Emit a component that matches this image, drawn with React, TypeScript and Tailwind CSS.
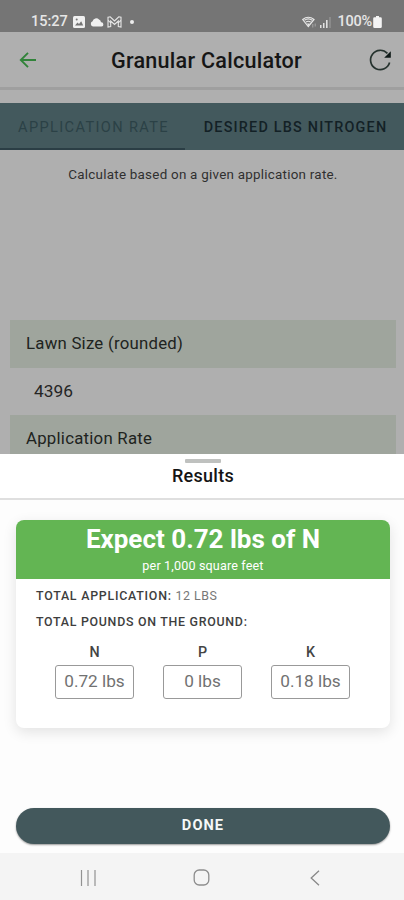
import React from 'react';

type Nutrient = {
  label: string;
  amount: string;
};

const nutrients: Nutrient[] = [
  { label: 'N', amount: '0.72 lbs' },
  { label: 'P', amount: '0 lbs' },
  { label: 'K', amount: '0.18 lbs' },
];

const StatusBar: React.FC = () => (
  <div className="flex h-8 items-center bg-[#757575] pt-3 pl-[31px] pr-[22px] text-[14.5px] font-medium text-[#e6e6e6]">
    <span>15:27</span>
    <svg className="ml-[5px] h-3 w-3" viewBox="0 0 12 12">
      <rect width="12" height="12" rx="1.5" fill="#f0f0f0" />
      <path d="M2 9.5 4.5 6.5 6 8 8.2 5.2 10.2 9.5Z" fill="#757575" />
      <circle cx="3.7" cy="3.4" r="1" fill="#757575" />
    </svg>
    <svg className="ml-[5px] h-2.5 w-3.5" viewBox="0 0 14 10">
      <path d="M3 9.5a2.7 2.7 0 0 1-.4-5.2A3.7 3.7 0 0 1 9 2.6 3.3 3.3 0 0 1 11 5.3a2.1 2.1 0 0 1 .5 4.2Z" fill="#f0f0f0" />
    </svg>
    <svg className="ml-[3px] h-3 w-[15px]" viewBox="0 0 15 12" fill="none" stroke="#e8e8e8" strokeWidth="1.1">
      <path d="M1 1.2 3.2.8 7.5 5 11.8.8 14 1.2V11L11.3 10.5V5L7.5 8.5 3.7 5V10.5L1 11ZM1 4l2.7 3M14 4l-2.7 3" />
    </svg>
    <span className="ml-2 h-1 w-1 rounded-full bg-[#ececec]" />

    <svg className="ml-auto h-3 w-4" viewBox="0 0 16 12" fill="none">
      <path d="M.7 3.5Q6.3-1 12 3.5L6.3 10.5Z" stroke="#e8e8e8" strokeWidth="1.2" />
      <path d="M2.5 4.2Q6.3 1.4 10.2 4.2M4 6.1Q6.3 4.4 8.6 6.1" stroke="#e8e8e8" strokeWidth="1.2" />
      <path d="M5 7.5h2.7L6.3 10Z" fill="#e8e8e8" />
      <path d="M10.8 8v3.5M13.2 7.5v3" stroke="#a5a5a5" strokeWidth="1" />
    </svg>
    <svg className="ml-[2px] h-[11px] w-[11px]" viewBox="0 0 11 11">
      <path d="M0 8h1.5v3H0zM3 6h1.5v5H3zM6 3h1.6v8H6z" fill="#e0e0e0" />
      <path d="M9.3 0h1.4v11H9.3z" fill="#949494" />
    </svg>
    <span className="ml-[6px] tracking-[-0.2px]">100%</span>
    <svg className="ml-px h-3 w-[9px]" viewBox="0 0 9 12">
      <path d="M3 0h3v1.2h1.5A1.3 1.3 0 0 1 8.8 2.5v8A1.4 1.4 0 0 1 7.4 12H1.6A1.4 1.4 0 0 1 .2 10.5v-8a1.3 1.3 0 0 1 1.3-1.3H3Z" fill="#f4f4f4" />
    </svg>
  </div>
);

const Header: React.FC = () => (
  <header className="flex h-[58px] shrink-0 items-center justify-between border-b-3 border-[#9f9f9f] pt-[1px] pl-[19px] pr-3">
    <svg className="h-[18px] w-[18px]" viewBox="0 0 18 18" fill="none" stroke="#31833a" strokeWidth="1.9">
      <path d="M9 1.8 1.8 9 9 16.2M2 9h15" />
    </svg>
    <h1 className="ml-[8px] pt-0.5 text-[21.6px] font-medium tracking-[0.25px] text-[#161616]">Granular Calculator</h1>
    <svg className="h-6 w-6" viewBox="0 0 24 24" fill="none">
      <path d="M21.6 14.6A9.7 9.7 0 1 1 19.4 5.4" stroke="#26332f" strokeWidth="1.7" />
      <path d="M22.8 3.2V9.8H16.2Z" fill="#0f1a18" />
    </svg>
  </header>
);

const Tabs: React.FC = () => (
  <div className="mt-[13px] flex h-[47px] shrink-0 bg-[#43595d]">
    <button className="w-[185px] border-b-2 border-[#2b3e45] pt-1 pl-0.5 text-[14.6px] tracking-[1.35px] text-[#2b4146]">
      APPLICATION RATE
    </button>
    <button className="flex-1 whitespace-nowrap pt-0.5 pl-0.5 text-[14.4px] font-medium tracking-[1.2px] text-[#132126]">
      DESIRED LBS NITROGEN
    </button>
  </div>
);

const FieldLabel: React.FC<{ children: React.ReactNode }> = ({ children }) => (
  <div className="flex h-12 shrink-0 items-center bg-[#9fa59d] pl-4 text-[16.8px] tracking-[0.24px] text-[#202320]">
    {children}
  </div>
);

const ResultCard: React.FC = () => (
  <section className="mt-5 mr-[14px] ml-4 h-52 overflow-hidden rounded-[8px] bg-white shadow-[0_4px_14px_rgba(0,0,0,0.11)]">
    <div className="h-[59px] bg-[#63b553] text-center text-white">
      <h3 className="pt-1 text-[26px] leading-[31px] font-bold">Expect 0.72 lbs of N</h3>
      <p className="pt-px text-[12.6px] leading-[20px] tracking-[0.15px]">per 1,000 square feet</p>
    </div>
    <div className="px-5 pt-2 text-[12.4px] leading-[18px] tracking-[0.76px] text-[#3e3e3e]">
      <p>
        <span className="font-medium">TOTAL APPLICATION:</span>{' '}
        <span className="tracking-[0.5px] text-[#777]">12 LBS</span>
      </p>
      <p className="mt-2 font-medium tracking-[0.72px]">TOTAL POUNDS ON THE GROUND:</p>
    </div>
    <div className="mt-[11px] flex justify-between pl-[39px] pr-10">
      {nutrients.map((item) => (
        <div key={item.label} className="w-[79px] text-center">
          <div className="text-[14.3px] leading-5 font-medium text-[#444]">{item.label}</div>
          <div className="mt-[3px] h-[34px] rounded-[3px] border border-[#999] text-[17.2px] leading-[31px] text-[#717171]">
            {item.amount}
          </div>
        </div>
      ))}
    </div>
  </section>
);

const NavBar: React.FC = () => (
  <nav className="flex h-[47px] items-center bg-[#f4f4f4] pt-0.5 pl-20 pr-[83px]">
    <svg className="h-4 w-4" viewBox="0 0 16 16" stroke="#929292" strokeWidth="1.2">
      <path d="M1.5 0v16M8 0v16M15 0v16" />
    </svg>
    <svg className="ml-[97px] h-[17px] w-[17px]" viewBox="0 0 17 17" fill="none" stroke="#8d8d8d" strokeWidth="1.3">
      <rect x="1.2" y="1" width="14.6" height="15" rx="5" />
    </svg>
    <svg className="ml-auto h-4 w-3" viewBox="0 0 12 16" fill="none" stroke="#888" strokeWidth="1.3">
      <path d="M10 .8 2.2 8l7.8 7.2" />
    </svg>
  </nav>
);

const App: React.FC = () => {
  return (
    <div className="flex h-[900px] w-[404px] flex-col overflow-hidden bg-[#afafaf] font-['Roboto',sans-serif]">
      <StatusBar />
      <main className="flex h-[422px] shrink-0 flex-col overflow-hidden">
        <Header />
        <Tabs />
        <p className="mt-[14px] h-[156px] shrink-0 pl-0.5 text-center text-[13.4px] leading-[22px] tracking-[0.25px] text-[#303030]">
          Calculate based on a given application rate.
        </p>
        <div className="mr-2 ml-[10px]">
          <FieldLabel>Lawn Size (rounded)</FieldLabel>
          <div className="flex h-[47px] items-center pl-6 text-[17.3px] text-[#252525]">4396</div>
          <FieldLabel>Application Rate</FieldLabel>
        </div>
      </main>

      <div className="flex h-[399px] shrink-0 flex-col bg-[#fdfdfd]">
        <div className="h-[46px] shrink-0 border-b-2 border-[#dfdfdf] bg-white pt-[5px] text-center">
          <div className="mx-auto h-1 w-9 translate-x-px rounded-[1px] bg-[#bfc1bf]" />
          <h2 className="mt-px pl-0.5 text-[18px] leading-[24px] font-medium tracking-[0.3px] text-[#141414]">Results</h2>
        </div>
        <ResultCard />
        <button className="mt-auto mr-[14px] mb-[9px] ml-4 h-9 shrink-0 rounded-full bg-[#43585c] text-[14.6px] font-bold tracking-[1.05px] text-[#f5f8f8] shadow-[0_1px_2px_rgba(0,0,0,0.4)]">
          DONE
        </button>
      </div>
      <NavBar />
    </div>
  );
};

export default App;
